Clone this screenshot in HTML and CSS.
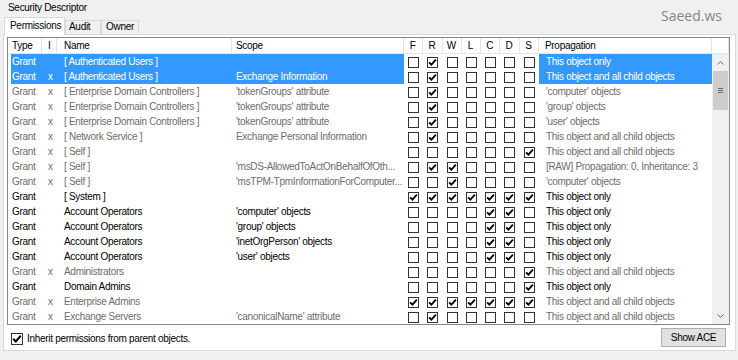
FILE: index.html
```html
<!DOCTYPE html>
<html>
<head>
<meta charset="utf-8">
<link rel="stylesheet" href="styles.css">
</head>
<body>
<svg class="defs" width="0" height="0"><symbol id="k" viewBox="0 0 9 9"><path d="M1.1 4.3 L3.4 6.7 L7.9 1.6" fill="none" stroke="#000" stroke-width="1.8"/></symbol></svg>
<div class="top">
  <div class="title">Security Descriptor</div>
  <div class="brand">Saeed.ws</div>
  <div class="tabs">
    <div class="tab active">Permissions</div>
    <div class="tab t-audit">Audit</div>
    <div class="tab t-owner">Owner</div>
  </div>
</div>
<div class="panel">
  <div class="lv">
    <div class="hdr">
      <span>Type</span><span>I</span><span>Name</span><span>Scope</span><span class="c">F</span><span class="c">R</span><span class="c">W</span><span class="c">L</span><span class="c">C</span><span class="c">D</span><span class="c">S</span><span>Propagation</span><span></span>
    </div>
    <div class="body">
      <div class="rows">
        <div class="row s"><span>Grant</span><span></span><span>[ Authenticated Users ]</span><span></span><i class="cb"></i><i class="cb"><svg><use href="#k"/></svg></i><i class="cb"></i><i class="cb"></i><i class="cb"></i><i class="cb"></i><i class="cb"></i><span>This object only</span></div>
        <div class="row s"><span>Grant</span><span>x</span><span>[ Authenticated Users ]</span><span>Exchange Information</span><i class="cb"></i><i class="cb"><svg><use href="#k"/></svg></i><i class="cb"></i><i class="cb"></i><i class="cb"></i><i class="cb"></i><i class="cb"></i><span>This object and all child objects</span></div>
        <div class="row g"><span>Grant</span><span>x</span><span>[ Enterprise Domain Controllers ]</span><span>'tokenGroups' attribute</span><i class="cb"></i><i class="cb"><svg><use href="#k"/></svg></i><i class="cb"></i><i class="cb"></i><i class="cb"></i><i class="cb"></i><i class="cb"></i><span>'computer' objects</span></div>
        <div class="row g"><span>Grant</span><span>x</span><span>[ Enterprise Domain Controllers ]</span><span>'tokenGroups' attribute</span><i class="cb"></i><i class="cb"><svg><use href="#k"/></svg></i><i class="cb"></i><i class="cb"></i><i class="cb"></i><i class="cb"></i><i class="cb"></i><span>'group' objects</span></div>
        <div class="row g"><span>Grant</span><span>x</span><span>[ Enterprise Domain Controllers ]</span><span>'tokenGroups' attribute</span><i class="cb"></i><i class="cb"><svg><use href="#k"/></svg></i><i class="cb"></i><i class="cb"></i><i class="cb"></i><i class="cb"></i><i class="cb"></i><span>'user' objects</span></div>
        <div class="row g"><span>Grant</span><span>x</span><span>[ Network Service ]</span><span>Exchange Personal Information</span><i class="cb"></i><i class="cb"><svg><use href="#k"/></svg></i><i class="cb"></i><i class="cb"></i><i class="cb"></i><i class="cb"></i><i class="cb"></i><span>This object and all child objects</span></div>
        <div class="row g"><span>Grant</span><span>x</span><span>[ Self ]</span><span></span><i class="cb"></i><i class="cb"></i><i class="cb"></i><i class="cb"></i><i class="cb"></i><i class="cb"></i><i class="cb"><svg><use href="#k"/></svg></i><span>This object and all child objects</span></div>
        <div class="row g"><span>Grant</span><span>x</span><span>[ Self ]</span><span>'msDS-AllowedToActOnBehalfOfOth...</span><i class="cb"></i><i class="cb"><svg><use href="#k"/></svg></i><i class="cb"><svg><use href="#k"/></svg></i><i class="cb"></i><i class="cb"></i><i class="cb"></i><i class="cb"></i><span>[RAW] Propagation: 0, Inheritance: 3</span></div>
        <div class="row g"><span>Grant</span><span>x</span><span>[ Self ]</span><span>'msTPM-TpmInformationForComputer...</span><i class="cb"></i><i class="cb"></i><i class="cb"><svg><use href="#k"/></svg></i><i class="cb"></i><i class="cb"></i><i class="cb"></i><i class="cb"></i><span>'computer' objects</span></div>
        <div class="row"><span>Grant</span><span></span><span>[ System ]</span><span></span><i class="cb"><svg><use href="#k"/></svg></i><i class="cb"><svg><use href="#k"/></svg></i><i class="cb"><svg><use href="#k"/></svg></i><i class="cb"><svg><use href="#k"/></svg></i><i class="cb"><svg><use href="#k"/></svg></i><i class="cb"><svg><use href="#k"/></svg></i><i class="cb"><svg><use href="#k"/></svg></i><span>This object only</span></div>
        <div class="row"><span>Grant</span><span></span><span>Account Operators</span><span>'computer' objects</span><i class="cb"></i><i class="cb"></i><i class="cb"></i><i class="cb"></i><i class="cb"><svg><use href="#k"/></svg></i><i class="cb"><svg><use href="#k"/></svg></i><i class="cb"></i><span>This object only</span></div>
        <div class="row"><span>Grant</span><span></span><span>Account Operators</span><span>'group' objects</span><i class="cb"></i><i class="cb"></i><i class="cb"></i><i class="cb"></i><i class="cb"><svg><use href="#k"/></svg></i><i class="cb"><svg><use href="#k"/></svg></i><i class="cb"></i><span>This object only</span></div>
        <div class="row"><span>Grant</span><span></span><span>Account Operators</span><span>'inetOrgPerson' objects</span><i class="cb"></i><i class="cb"></i><i class="cb"></i><i class="cb"></i><i class="cb"><svg><use href="#k"/></svg></i><i class="cb"><svg><use href="#k"/></svg></i><i class="cb"></i><span>This object only</span></div>
        <div class="row"><span>Grant</span><span></span><span>Account Operators</span><span>'user' objects</span><i class="cb"></i><i class="cb"></i><i class="cb"></i><i class="cb"></i><i class="cb"><svg><use href="#k"/></svg></i><i class="cb"><svg><use href="#k"/></svg></i><i class="cb"></i><span>This object only</span></div>
        <div class="row g"><span>Grant</span><span>x</span><span>Administrators</span><span></span><i class="cb"></i><i class="cb"></i><i class="cb"></i><i class="cb"></i><i class="cb"></i><i class="cb"></i><i class="cb"><svg><use href="#k"/></svg></i><span>This object and all child objects</span></div>
        <div class="row"><span>Grant</span><span></span><span>Domain Admins</span><span></span><i class="cb"></i><i class="cb"></i><i class="cb"></i><i class="cb"></i><i class="cb"></i><i class="cb"></i><i class="cb"><svg><use href="#k"/></svg></i><span>This object only</span></div>
        <div class="row g"><span>Grant</span><span>x</span><span>Enterprise Admins</span><span></span><i class="cb"><svg><use href="#k"/></svg></i><i class="cb"><svg><use href="#k"/></svg></i><i class="cb"><svg><use href="#k"/></svg></i><i class="cb"><svg><use href="#k"/></svg></i><i class="cb"><svg><use href="#k"/></svg></i><i class="cb"><svg><use href="#k"/></svg></i><i class="cb"><svg><use href="#k"/></svg></i><span>This object and all child objects</span></div>
        <div class="row g"><span>Grant</span><span>x</span><span>Exchange Servers</span><span>'canonicalName' attribute</span><i class="cb"></i><i class="cb"><svg><use href="#k"/></svg></i><i class="cb"></i><i class="cb"></i><i class="cb"></i><i class="cb"></i><i class="cb"></i><span>This object and all child objects</span></div>
      </div>
      <div class="sb">
        <div class="arr"><svg width="7" height="4" viewBox="0 0 7 4"><path d="M0.5 3.5 L3.5 0.7 L6.5 3.5" fill="none" stroke="#606060" stroke-width="1"/></svg></div>
        <div class="thumb"><span class="grip"></span></div>
        <div class="track"></div>
        <div class="arr"><svg width="7" height="4" viewBox="0 0 7 4"><path d="M0.5 0.5 L3.5 3.3 L6.5 0.5" fill="none" stroke="#606060" stroke-width="1"/></svg></div>
      </div>
    </div>
  </div>
  <div class="foot">
    <label class="inherit"><i class="cb big"><svg><use href="#k"/></svg></i><span>Inherit permissions from parent objects.</span></label>
    <div class="btn">Show ACE</div>
  </div>
</div>
</body>
</html>
```
FILE: styles.css
```css
* { box-sizing: border-box; }
html, body { margin: 0; }
body {
  width: 738px;
  height: 360px;
  overflow: hidden;
  background: #f0f0f0;
  font-family: "Liberation Sans", Arial, sans-serif;
  font-size: 10px;
  line-height: 15px;
  letter-spacing: -0.3px;
  color: #000;
}
.defs { position: absolute; width: 0; height: 0; }

.top {
  display: grid;
  grid-template-columns: 1fr auto;
  grid-template-rows: 17px 17px;
}
.title {
  grid-column: 1;
  grid-row: 1;
  padding: 2px 0 0 8px;
  line-height: 12px;
}
.brand {
  grid-column: 2;
  grid-row: 1 / 3;
  font-family: "Open Sans", sans-serif;
  font-size: 14px;
  line-height: 16px;
  letter-spacing: 0;
  color: #868686;
  padding: 8px 16px 0 0;
}
.tabs {
  grid-column: 1;
  grid-row: 2;
  display: flex;
  align-items: flex-end;
  padding-left: 4px;
}
.tab {
  height: 14px;
  border: 1px solid #d9d9d9;
  border-bottom: 0;
  background: #f0f0f0;
  line-height: 12px;
  padding-left: 3px;
}
.tab.active {
  position: relative;
  z-index: 1;
  width: 61px;
  height: 18px;
  margin-bottom: -1px;
  background: #fff;
  line-height: 16px;
  padding-left: 5px;
}
.t-audit { width: 36px; }
.t-owner { width: 38px; padding-left: 4px; }

.panel {
  margin: 0 2px 0 3px;
  height: 317px;
  border: 1px solid #d9d9d9;
  background: #fff;
  padding: 2px 5px 0 3px;
}
.lv {
  height: 288px;
  border: 1px solid #828790;
}
.hdr {
  display: grid;
  grid-template-columns: 34px 15px 175px 172px repeat(7, 19.286px) 173px 17px;
  height: 16px;
  border-bottom: 1px solid #e5e5e5;
}
.hdr > span {
  border-right: 1px solid #e5e5e5;
  white-space: nowrap;
  overflow: hidden;
  line-height: 15px;
}
.hdr > span:nth-child(1) { padding-left: 4px; }
.hdr > span:nth-child(2) { padding-left: 6px; }
.hdr > span:nth-child(3) { padding-left: 7px; }
.hdr > span:nth-child(4) { padding-left: 4px; }
.hdr > span:nth-child(12) { padding-left: 6px; }
.hdr > span.c { text-align: center; padding-right: 1px; }

.body {
  display: flex;
  height: 270px;
}
.rows { width: 704px; }
.row {
  display: grid;
  grid-template-columns: 34px 15px 175px 172px repeat(7, 19.286px) 173px;
  height: 15px;
}
.row > span {
  white-space: nowrap;
  overflow: hidden;
  line-height: 15px;
}
.row > span:nth-child(1) { padding-left: 4px; }
.row > span:nth-child(2) { padding-left: 6px; }
.row > span:nth-child(3) { padding-left: 7px; }
.row > span:nth-child(4) { padding-left: 4px; }
.row > span:nth-child(12) { padding-left: 7px; }
.row.g { color: #6d6d6d; }
.row.s > span { background: #3399ff; color: #fff; }
.row.s > span:nth-child(1) {
  background: linear-gradient(90deg, #fff 3px, #3399ff 3px);
}

.cb {
  display: block;
  width: 11px;
  height: 11px;
  margin: 3px 0 0 4px;
  border: 1px solid #333;
  background: #fff;
}
.cb svg {
  display: block;
  width: 9px;
  height: 9px;
}
.cb.big {
  width: 12px;
  height: 12px;
  margin: 0;
}
.cb.big svg { width: 10px; height: 10px; }

.sb {
  width: 17px;
  background: #f0f0f0;
  display: flex;
  flex-direction: column;
}
.arr {
  height: 17px;
  display: flex;
  align-items: center;
  justify-content: center;
}
.thumb {
  height: 39px;
  margin: 0 1px;
  background: #cdcdcd;
  display: flex;
  align-items: center;
  justify-content: center;
}
.grip {
  width: 5px;
  height: 5px;
  background: linear-gradient(#6a6a6a 1px, transparent 1px, transparent 2px, #6a6a6a 2px, #6a6a6a 3px, transparent 3px, transparent 4px, #6a6a6a 4px);
}
.track { flex: 1; }

.foot {
  height: 25px;
  display: flex;
  align-items: center;
  justify-content: space-between;
  padding: 0 4px;
}
.inherit {
  display: flex;
  align-items: center;
  gap: 4px;
  margin-top: 2px;
}
.btn {
  width: 65px;
  height: 19px;
  border: 1px solid #adadad;
  background: #e1e1e1;
  text-align: center;
  line-height: 17px;
}
```
